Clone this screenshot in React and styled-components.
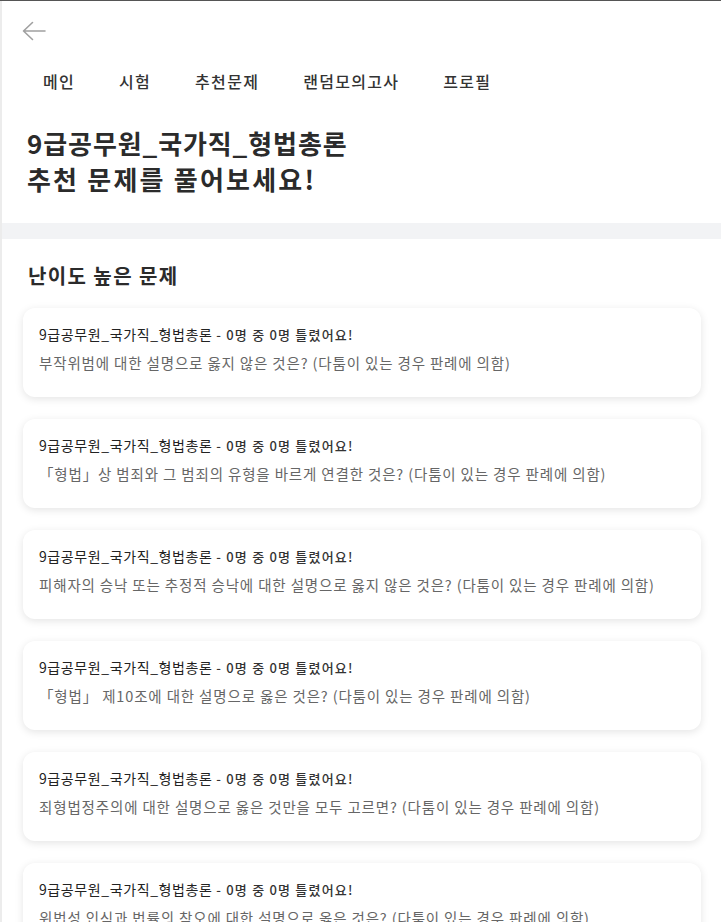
import * as React from "react"
import styled, { createGlobalStyle } from "styled-components"

const GlobalStyle = createGlobalStyle`
  html, body {
    margin: 0;
    padding: 0;
    background: #fff;
  }
  body {
    border-top: 1px solid #555;
    font-family: "Noto Sans CJK KR", "Noto Sans", sans-serif;
    color: #222;
  }
`

const Page = styled.div`
  border-left: 2px solid #ececec;
  min-height: 100vh;
  background: #fff;
`

const TopBar = styled.div`
  display: flex;
  align-items: center;
  height: 60px;
  padding-left: 20px;
`

const BackButton = styled.button`
  display: flex;
  align-items: center;
  justify-content: center;
  border: 0;
  background: none;
  padding: 0;
  cursor: pointer;
`

const Nav = styled.nav`
  display: flex;
  gap: 44px;
  padding: 8px 0 0 41px;
`

const NavItem = styled.a`
  font-size: 16px;
  line-height: 24px;
  letter-spacing: 1.3px;
  color: #333;
  font-weight: 500;
  text-decoration: none;
`

const Headline = styled.h1`
  margin: 32px 0 26px 25px;
  font-size: 26px;
  line-height: 36px;
  font-weight: 700;
  color: #2b2b2b;
`

const HeadLine = styled.span`
  display: block;
  letter-spacing: ${(props) => props.$spacing};
`

const Band = styled.div`
  height: 16px;
  background: #f2f3f5;
`

const Section = styled.section`
  padding: 23px 20px 40px 21px;
`

const SectionTitle = styled.h2`
  margin: 0 0 18px 5px;
  font-size: 20px;
  line-height: 28px;
  letter-spacing: 1.4px;
  font-weight: 700;
  color: #2b2b2b;
`

const CardList = styled.div`
  display: flex;
  flex-direction: column;
  gap: 22px;
`

const Card = styled.div`
  height: 89px;
  box-sizing: border-box;
  padding: 16px 16px 0;
  border-radius: 12px;
  background: #fff;
  box-shadow: 0 2px 9px rgba(0, 0, 0, 0.11);
`

const CardHead = styled.div`
  font-size: 14px;
  line-height: 20px;
  letter-spacing: 0.6px;
  color: #222;
  white-space: nowrap;
`

const CardMeta = styled.span`
  font-size: 13px;
  letter-spacing: 1.2px;
  font-weight: 500;
  color: #333;
`

const CardQuestion = styled.div`
  margin-top: 8px;
  font-size: 14.5px;
  line-height: 20px;
  letter-spacing: 0.85px;
  color: #666;
  white-space: nowrap;
`

const BackIcon = () => (
  <svg width="24" height="20" viewBox="0 0 24 20" fill="none">
    <path
      d="M23 10H1.5M10.5 1.5L1.5 10l9 8.5"
      stroke="#a0a0a0"
      strokeWidth="1.6"
      strokeLinecap="round"
      strokeLinejoin="round"
    />
  </svg>
)

const subject = "9급공무원_국가직_형법총론"

const questions = [
  "부작위범에 대한 설명으로 옳지 않은 것은? (다툼이 있는 경우 판례에 의함)",
  "「형법」상 범죄와 그 범죄의 유형을 바르게 연결한 것은? (다툼이 있는 경우 판례에 의함)",
  "피해자의 승낙 또는 추정적 승낙에 대한 설명으로 옳지 않은 것은? (다툼이 있는 경우 판례에 의함)",
  "「형법」 제10조에 대한 설명으로 옳은 것은? (다툼이 있는 경우 판례에 의함)",
  "죄형법정주의에 대한 설명으로 옳은 것만을 모두 고르면? (다툼이 있는 경우 판례에 의함)",
  "위법성 인식과 법률의 착오에 대한 설명으로 옳은 것은? (다툼이 있는 경우 판례에 의함)",
  "공범에 대한 설명으로 옳지 않은 것은? (다툼이 있는 경우 판례에 의함)"
]

const navItems = ["메인", "시험", "추천문제", "랜덤모의고사", "프로필"]

export default function App() {
  return (
    <>
      <GlobalStyle />
      <Page>
        <TopBar>
          <BackButton aria-label="뒤로가기">
            <BackIcon />
          </BackButton>
        </TopBar>
        <Nav>
          {navItems.map((item) => (
            <NavItem key={item} href="#">
              {item}
            </NavItem>
          ))}
        </Nav>
        <Headline>
          <HeadLine $spacing="0.9px">{subject}</HeadLine>
          <HeadLine $spacing="2.2px">추천 문제를 풀어보세요!</HeadLine>
        </Headline>
        <Band />
        <Section>
          <SectionTitle>난이도 높은 문제</SectionTitle>
          <CardList>
            {questions.map((q) => (
              <Card key={q}>
                <CardHead>
                  {subject} <CardMeta>- 0명 중 0명 틀렸어요!</CardMeta>
                </CardHead>
                <CardQuestion>{q}</CardQuestion>
              </Card>
            ))}
          </CardList>
        </Section>
      </Page>
    </>
  )
}
